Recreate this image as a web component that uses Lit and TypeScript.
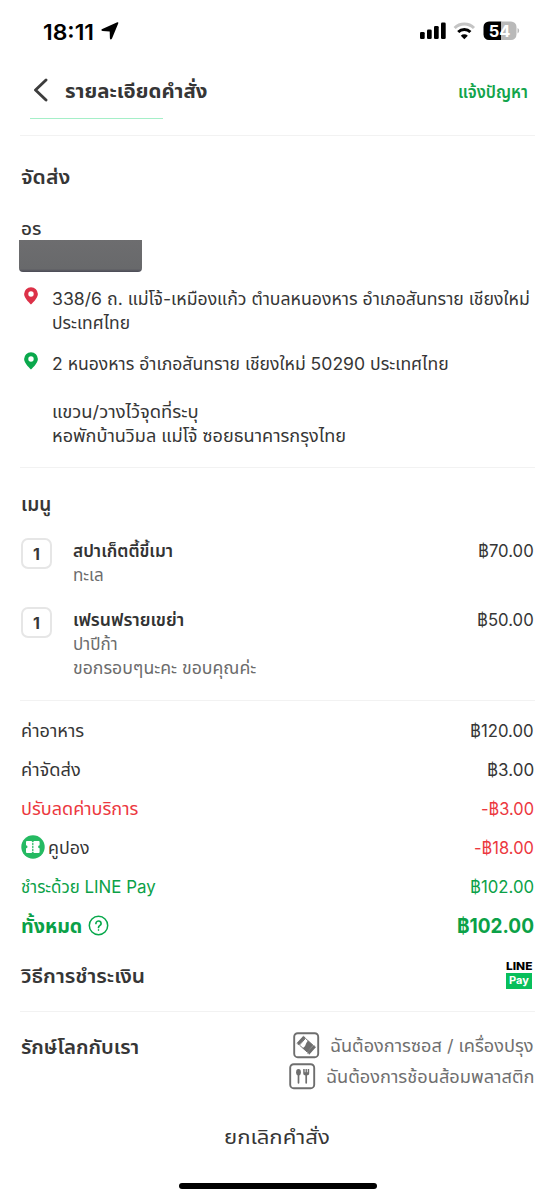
import { LitElement, html, css, nothing } from "lit";
import { customElement, property } from "lit/decorators.js";

/* A line of text condensed or expanded horizontally to a set measure. */
@customElement("fit-text")
class FitText extends LitElement {
  @property({ type: Number }) w = 0;
  static styles = css`
    :host { display: inline-block; white-space: nowrap; flex: none; }
    .inner { display: inline-block; transform-origin: 0 50%; }
  `;
  firstUpdated() {
    this.fit();
    document.fonts?.ready.then(() => this.fit());
  }
  fit() {
    const el = this.renderRoot.querySelector(".inner") as HTMLElement;
    const natural = el.offsetWidth;
    if (!natural || !this.w) return;
    this.style.width = `${this.w}px`;
    el.style.transform = `scaleX(${this.w / natural})`;
  }
  render() {
    return html`<span class="inner"><slot></slot></span>`;
  }
}

const pin = (color: string) => html`
  <svg class="pin" width="14" height="18" viewBox="0 0 14 18">
    <path fill=${color} fill-rule="evenodd"
      d="M7 .2A6.900 6.900 0 0 0 .1 7.100C.1 11.600 7 17.600 7 17.600S13.900 11.600 13.900 7.100A6.900 6.900 0 0 0 7 .2ZM7 4.300a2.700 2.700 0 1 1 0 5.400a2.700 2.700 0 0 1 0-5.400Z"/>
  </svg>`;

const couponIcon = html`
  <svg width="24" height="24" viewBox="0 0 24 24">
    <circle cx="12" cy="12" r="11.700" fill="#25ba62"/>
    <path fill="#fff" d="M5.900 6H10.700a1.100 1.100 0 0 0 2.200 0H17.700a.9.9 0 0 1 .9.900V10.300a1.500 1.500 0 0 0 0 3V17.100a.9.900 0 0 1-.9.900H12.900a1.100 1.100 0 0 0-2.200 0H5.900a.9.900 0 0 1-.9-.900V13.300a1.500 1.500 0 0 0 0-3V6.900a.9.900 0 0 1 .9-.900Z"/>
    <path stroke="#25ba62" stroke-width="1.200" d="M11.800 7.800v2.400M11.800 11v2M11.800 13.800v2.400"/>
  </svg>`;

const helpIcon = html`
  <svg width="21" height="21" viewBox="0 0 21 21" fill="none" stroke="#07a84b" stroke-width="1.500">
    <circle cx="10.500" cy="10.500" r="9.200"/>
    <path stroke-width="1.700" stroke-linecap="round" d="M7.900 8.400a2.600 2.400 0 1 1 4.100 2c-1 .65-1.500 1-1.500 2.100"/>
    <circle cx="10.500" cy="15" r=".5" stroke-width="1"/>
  </svg>`;

const sauceIcon = html`
  <svg width="27" height="27" viewBox="0 0 27 27" fill="none">
    <rect x="1.200" y="1.200" width="24" height="24" rx="3.500" stroke="#6e6e6e" stroke-width="1.900"/>
    <g transform="translate(13.300 13.200) rotate(42)">
      <path fill="#6e6e6e" d="M-8.500-5.500l1 1 1-1 1 1V4.500l-1 1-1-1-1 1ZM8.500-5.500l-1 1-1-1-1 1V4.500l1 1 1-1 1 1Z"/>
      <path fill="#fff" stroke="#6e6e6e" stroke-width=".9" d="M-5.200-4.500H5.200V4.500H-5.200Z"/>
      <path fill="#6e6e6e" d="M-1.500-4.500H5V4.500H-1C1.500 2-2.500-1-1.500-4.500Z"/>
    </g>
  </svg>`;

const cutleryIcon = html`
  <svg width="27" height="27" viewBox="0 0 27 27" fill="none">
    <rect x="1.200" y="1.200" width="24" height="24" rx="3.500" stroke="#6e6e6e" stroke-width="1.900"/>
    <ellipse cx="9.500" cy="9.300" rx="2.400" ry="3.200" fill="#6e6e6e"/>
    <path stroke="#6e6e6e" stroke-width="1.700" stroke-linecap="round" d="M9.500 11v8.800M17.200 11v8.800"/>
    <path fill="#6e6e6e" d="M14.200 6h1.500v3.300h.8V6h1.400v3.300h.8V6h1.500v4.200c0 1.300-1 2.300-3 2.300s-3-1-3-2.300Z"/>
  </svg>`;

const statusRight = html`
  <svg width="102" height="22" viewBox="0 0 102 22">
    <rect x="1" y="12" width="4.700" height="7" rx="1.300"/>
    <rect x="8" y="9.500" width="4.700" height="9.500" rx="1.300"/>
    <rect x="15" y="6" width="4.700" height="13" rx="1.300"/>
    <rect x="22" y="2.500" width="4.700" height="16.500" rx="1.300"/>
    <g fill="none">
      <path stroke="#c4c4c4" stroke-width="3" d="M35.600 8a13.700 13.700 0 0 1 19.400 0"/>
      <path stroke="#000" stroke-width="3" d="M39.200 12a8.700 8.700 0 0 1 12.200 0"/>
    </g>
    <path d="M45.300 19.200l-3.500-3.500a4.900 4.900 0 0 1 7 0Z"/>
    <path d="M70 1.500H82.300V20H70a5.500 5.500 0 0 1-5.500-5.500V7A5.500 5.500 0 0 1 70 1.500Z"/>
    <path fill="#b9b9b9" d="M82.300 1.500H92A5.500 5.500 0 0 1 97.500 7V14.500A5.500 5.500 0 0 1 92 20H82.300ZM98.500 8q1.700.8 1.700 2.700t-1.700 2.700Z"/>
    <text x="80.500" y="16.600" text-anchor="middle" font-family="Inter" font-weight="700" font-size="16.500" fill="#fff">54</text>
  </svg>`;

const items = [
  { qty: "1", name: "สปาเก็ตตี้ขี้เมา", w: 100, notes: [["ทะเล", 31]], price: "฿70.00", pw: 56 },
  { qty: "1", name: "เฟรนฟรายเขย่า", w: 111, notes: [["ปาปีก้า", 45], ["ขอกรอบๆนะคะ ขอบคุณค่ะ", 183]], price: "฿50.00", pw: 57 },
];

const sums = [
  { label: "ค่าอาหาร", w: 63, value: "฿120.00", vw: 64, tone: "" },
  { label: "ค่าจัดส่ง", w: 60, value: "฿3.00", vw: 47, tone: "" },
  { label: "ปรับลดค่าบริการ", w: 117, value: "-฿3.00", vw: 53, tone: "red" },
  { label: "คูปอง", w: 42, value: "-฿18.00", vw: 60, tone: "coupon" },
  { label: "ชำระด้วย LINE Pay", w: 135, value: "฿102.00", vw: 64, tone: "green" },
];

@customElement("app-root")
class AppRoot extends LitElement {
  static styles = css`
    :host {
      display: block; width: 555px; height: 1200px; overflow: hidden; background: #fff;
      color: #363636; font: 380 17px/24px Inter, "Noto Sans Thai", "Noto Sans CJK SC", sans-serif;
    }
    * { box-sizing: border-box; }
    svg { display: block; flex: none; }
    .status { height: 60px; padding: 2px 34px 0 43px; display: flex; align-items: center; }
    .time { color: #000; font-size: 22px; font-weight: 600; margin-top: 1px; }
    .arrow { margin-left: 7px; }
    .grow { flex: 1; }
    .head { height: 58px; padding: 2px 27px 0 33px; display: flex; align-items: center; }
    .title { font-size: 20px; font-weight: 700; margin: 1px 0 0 16px; }
    .report { color: #12a44b; font-weight: 600; margin-top: 3px; }
    .underline { width: 133px; height: 1px; background: #a5efc8; margin-left: 30px; }
    .gap { height: 16px; }
    .body { margin: 0 20px; }
    section { border-top: 1px solid #f2f2f2; padding: 0 1px; }
    h2 { margin: 0; font-size: 19px; line-height: 28px; font-weight: 600; display: flex; }
    .ship { height: 332px; padding-top: 28px; }
    .who { margin-top: 25px; font-weight: 500; line-height: 24px; display: flex; }
    .mask { width: 123px; height: 32px; margin: -1px 0 0 -2px; border-radius: 0 0 4px 4px; background: linear-gradient(#6d6d6f, #68696b 90%, #4a4a56); }
    .addr { display: flex; margin-top: 15px; }
    .addr + .addr { margin-top: 17px; }
    .pin { margin: 0 14px 0 3px; }
    .lines { display: flex; flex-direction: column; }
    .lines fit-text { height: 24px; }
    .menu { height: 233px; padding-top: 23px; }
    .item { display: flex; margin-top: 20px; align-items: flex-start; }
    .item + .item { margin-top: 21px; }
    .qty { width: 31px; height: 31px; border: 2px solid #e6e6e6; border-radius: 7px; font-weight: 700; font-size: 16px; line-height: 28px; text-align: center; margin: -1px 21px 0 0; }
    .item .lines { flex: 1; color: #6c6c6c; }
    .item .name { font-weight: 600; color: #333; }
    .money { height: 311px; padding-top: 10px; }
    .row { height: 39px; display: flex; align-items: center; justify-content: space-between; }
    .row .left { display: flex; align-items: center; gap: 3px; }
    .row .left svg { margin-top: -1px; }
    .red, .coupon .value { color: #ec3840; }
    .green, .total { color: #0ba147; }
    .total { font-size: 20px; font-weight: 700; }
    .total .left { gap: 6px; }
    .pay { height: 62px; padding-top: 1px; display: flex; align-items: center; justify-content: space-between; }
    .logo { width: 26px; margin: -3px 2px 0 0; color: #000; font: 800 10.500px/11px Inter; display: flex; flex-direction: column; align-items: center; }
    .chip { width: 26px; height: 16px; margin-top: 1px; background: #08bf5b; color: #fff; font: 700 11px/15px Inter; text-align: center; display: block; }
    .eco { height: 102px; padding-top: 20px; display: flex; justify-content: space-between; }
    .eco h2 { padding-top: 2px; }
    .opts { display: flex; flex-direction: column; align-items: flex-end; gap: 4px; color: #707070; }
    .opt { display: flex; align-items: center; gap: 10px; height: 27px; }
    .cancel { height: 46px; padding: 3px 2px 0 0; display: flex; align-items: center; justify-content: center; font-size: 19px; }
    .home { width: 198px; height: 6px; border-radius: 3px; background: #000; margin: 24px 0 0 179px; }
  `;

  render() {
    return html`
      <div class="status">
        <fit-text class="time" w="51">18:11</fit-text>
        <svg class="arrow" width="18" height="18" viewBox="0 0 18 18"><path d="M16.300.2Q17.800 0 17.200 1.500L11 16.500Q9.500 18.500 8.900 16.200L8.700 9.400 1.500 9Q-.8 8.300 1.300 7Z"/></svg>
        <div class="grow"></div>${statusRight}
      </div>
      <div class="head">
        <svg width="16" height="24" viewBox="0 0 16 24" fill="none" stroke="#3d3d3d" stroke-width="2.900" stroke-linecap="round" stroke-linejoin="round"><path d="M13 2 2.500 12 13 22"/></svg>
        <fit-text class="title" w="142">รายละเอียดคำสั่ง</fit-text>
        <div class="grow"></div>
        <fit-text class="report" w="70">แจ้งปัญหา</fit-text>
      </div>
      <div class="underline"></div>
      <div class="gap"></div>
      <div class="body">
        <section class="ship">
          <h2><fit-text w="49">จัดส่ง</fit-text></h2>
          <div class="who"><fit-text w="20">อร</fit-text></div>
          <div class="mask"></div>
          <div class="addr">${pin("#dc3148")}
            <div class="lines">
              <fit-text w="478">338/6 ถ. แม่โจ้-เหมืองแก้ว ตำบลหนองหาร อำเภอสันทราย เชียงใหม่</fit-text>
              <fit-text w="78">ประเทศไทย</fit-text>
            </div>
          </div>
          <div class="addr">${pin("#0aa84c")}
            <div class="lines">
              <fit-text w="397">2 หนองหาร อำเภอสันทราย เชียงใหม่ 50290 ประเทศไทย</fit-text>
              <fit-text></fit-text>
              <fit-text w="147">แขวน/วางไว้จุดที่ระบุ</fit-text>
              <fit-text w="294">หอพักบ้านวิมล แม่โจ้ ซอยธนาคารกรุงไทย</fit-text>
            </div>
          </div>
        </section>
        <section class="menu">
          <h2><fit-text w="30">เมนู</fit-text></h2>
          ${items.map((i) => html`
            <div class="item">
              <div class="qty">${i.qty}</div>
              <div class="lines">
                <fit-text class="name" w=${i.w}>${i.name}</fit-text>
                ${i.notes.map(([t, w]) => html`<fit-text w=${w}>${t}</fit-text>`)}
              </div>
              <fit-text w=${i.pw}>${i.price}</fit-text>
            </div>`)}
        </section>
        <section class="money">
          ${sums.map((s) => html`
            <div class="row ${s.tone}">
              <div class="left">${s.tone === "coupon" ? couponIcon : nothing}<fit-text w=${s.w}>${s.label}</fit-text></div>
              <fit-text class="value" w=${s.vw}>${s.value}</fit-text>
            </div>`)}
          <div class="row total">
            <div class="left"><fit-text w="61">ทั้งหมด</fit-text>${helpIcon}</div>
            <fit-text w="77">฿102.00</fit-text>
          </div>
          <div class="pay">
            <h2><fit-text w="124">วิธีการชำระเงิน</fit-text></h2>
            <div class="logo"><fit-text w="26">LINE</fit-text><span class="chip">Pay</span></div>
          </div>
        </section>
        <section class="eco">
          <h2><fit-text w="118">รักษ์โลกกับเรา</fit-text></h2>
          <div class="opts">
            <div class="opt">${sauceIcon}<fit-text w="204">ฉันต้องการซอส / เครื่องปรุง</fit-text></div>
            <div class="opt">${cutleryIcon}<fit-text w="208">ฉันต้องการช้อนส้อมพลาสติก</fit-text></div>
          </div>
        </section>
      </div>
      <div class="cancel"><fit-text w="106">ยกเลิกคำสั่ง</fit-text></div>
      <div class="home"></div>
    `;
  }
}
